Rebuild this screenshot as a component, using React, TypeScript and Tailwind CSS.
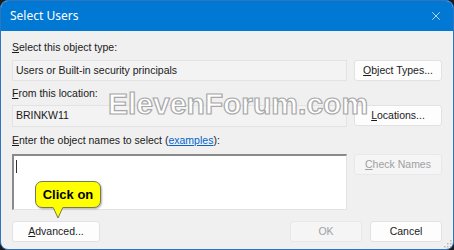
import { X } from "lucide-react";

function Btn({ children, disabled, className = "" }: { children: React.ReactNode; disabled?: boolean; className?: string }) {
  return (
    <div
      className={`flex h-[21px] items-center justify-center rounded-[3px] border ${
        disabled ? "border-[#e8e8e8] bg-[#f5f5f5] text-[#a0a0a0]" : "border-[#e2e2e2] bg-[#fdfdfd] text-[#1a1a1a]"
      } text-[10.5px] ${className}`}
    >
      {children}
    </div>
  );
}

export default function App() {
  return (
    <div className="h-[250px] w-[454px] bg-[#1c1c1c] font-['Liberation_Sans',sans-serif]">
      <div className="relative flex h-full w-full flex-col overflow-hidden rounded-[8px] border border-[#2f76c0] bg-[#f0f0f0]">
        {/* title bar */}
        <div className="flex h-[30px] shrink-0 items-center justify-between bg-[#0078d4] pl-[9px] pr-[10px] text-white">
          <span className="font-['Noto_Sans',sans-serif] text-[12px]">Select Users</span>
          <X size={14} strokeWidth={1.2} />
        </div>

        <div className="flex flex-1 flex-col px-[11px] pt-[9px] text-[10.5px] text-[#1a1a1a]">
          <div className="leading-[14px]">
            <u>S</u>elect this object type:
          </div>
          <div className="mt-[6px] flex gap-[7px]">
            <div className="flex h-[21px] flex-1 items-center border border-[#e3e3e3] bg-[#f3f3f3] pl-[3px]">
              Users or Built-in security principals
            </div>
            <Btn className="w-[88px]">
              <span>
                <u>O</u>bject Types...
              </span>
            </Btn>
          </div>

          <div className="mt-[5px] leading-[14px]">
            <u>F</u>rom this location:
          </div>
          <div className="mt-[5px] flex gap-[7px]">
            <div className="flex h-[22px] flex-1 items-center border border-[#e3e3e3] bg-[#f3f3f3] pl-[3px]">
              BRINKW11
            </div>
            <Btn className="w-[88px]">
              <span>
                <u>L</u>ocations...
              </span>
            </Btn>
          </div>

          <div className="mt-[6px] leading-[14px]">
            <u>E</u>nter the object names to select (
            <span className="text-[#0066cc] underline">examples</span>):
          </div>
          <div className="mt-[7px] flex gap-[7px]">
            <div className="relative h-[56px] flex-1 border-t-2 border-l-2 border-t-[#8a8a8a] border-l-[#8a8a8a] border-r border-b border-r-[#e3e3e3] border-b-[#e3e3e3] bg-white">
              <div className="absolute left-[2px] top-[4px] h-[13px] w-[1px] bg-[#333]" />
            </div>
            <Btn disabled className="w-[88px]">
              <span>
                <u>C</u>heck Names
              </span>
            </Btn>
          </div>

          <div className="mt-[11px] flex items-center">
            <Btn className="w-[88px]">
              <span>
                <u>A</u>dvanced...
              </span>
            </Btn>
            <div className="flex-1" />
            <Btn disabled className="w-[72px]">OK</Btn>
            <Btn className="ml-[8px] w-[72px]">Cancel</Btn>
          </div>
        </div>

        {/* resize grip */}
        <svg className="absolute bottom-[1px] right-[1px]" width="9" height="9" viewBox="0 0 9 9">
          {[
            [7, 1], [7, 4], [4, 4], [7, 7], [4, 7], [1, 7],
          ].map(([x, y], i) => (
            <rect key={i} x={x} y={y} width="1.5" height="1.5" fill="#b8b8b8" />
          ))}
        </svg>

        {/* watermark */}
        <div
          className="pointer-events-none absolute left-[107px] top-[85px] font-['Liberation_Sans',sans-serif] text-[30px] font-bold leading-[36px] text-white"
          style={{ WebkitTextStroke: "1.2px #a8a8a8" }}
        >
          ElevenForum.com
        </div>

        {/* callout */}
        <div className="absolute left-[34px] top-[180px]">
          <div className="relative flex h-[27px] w-[66px] items-center justify-center rounded-[7px] border border-[#7a7a50] bg-[#ffff00] text-[13px] font-bold text-black shadow-[1px_1px_2px_rgba(0,0,0,0.3)]">
            Click on
          </div>
          <svg className="absolute left-[17px] top-[25px]" width="14" height="14" viewBox="0 0 14 14">
            <path d="M1 1 L6 12 L11 1" fill="#ffff00" stroke="#7a7a50" strokeWidth="1" />
            <rect x="1.5" y="0" width="9" height="2" fill="#ffff00" />
          </svg>
        </div>
      </div>
    </div>
  );
}
